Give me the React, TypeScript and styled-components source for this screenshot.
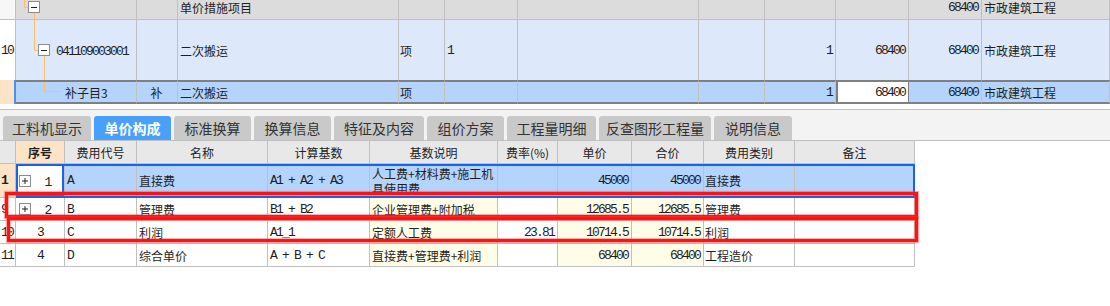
import React from 'react';
import styled, { createGlobalStyle, css } from 'styled-components';

const CJK = `'Noto Sans CJK SC', 'Noto Sans', sans-serif`;
const MONO = `'Liberation Mono', 'Noto Sans CJK SC', monospace`;

const TOP_COLS = '16px 121px 41px 221px 46px 73px 181px 66px 71px 73px 73px 1fr';
const BOTTOM_COLS = '16px 49px 72px 131px 102px 128px 60px 74px 72px 91px 120px';

const GRID = '#c0c0c0';
const TREE = '#f6c06a';
const SELECTED = '#b4d4fc';
const CREAM = '#fffde8';
const PEACH = '#fde4c6';
const FOCUS = '#1464f0';

type Align = 'left' | 'right' | 'center';
const justify = (a?: Align) => (a === 'right' ? 'flex-end' : a === 'center' ? 'center' : 'flex-start');

const GlobalStyle = createGlobalStyle`
  *, *::before, *::after { box-sizing: border-box; }
  html, body { margin: 0; padding: 0; background: #fff; }
  body { font-family: ${CJK}; font-size: 12px; color: #1e1e1e; }
`;

const Page = styled.div`
  position: relative;
  width: 1110px;
  height: 306px;
  overflow: hidden;
  background: #fff;
`;

/* ---------- upper grid (清单) ---------- */

const TopGrid = styled.div`
  height: 104px;
  overflow: hidden;
`;

const TopScroll = styled.div`
  margin-top: -5px;
`;

const TopRow = styled.div<{ $height: number }>`
  display: grid;
  grid-template-columns: ${TOP_COLS};
  height: ${p => p.$height}px;
`;

const TopCell = styled.div<{ $bg: string; $align?: Align; $bottom?: boolean; $thick?: boolean; $editing?: boolean }>`
  display: flex;
  align-items: center;
  justify-content: ${p => justify(p.$align)};
  min-width: 0;
  padding: 0 3px 0 2px;
  background: ${p => p.$bg};
  border-right: 1px solid ${GRID};
  border-bottom: ${p => (p.$bottom ? `1px solid ${GRID}` : 'none')};
  white-space: nowrap;
  overflow: hidden;
  ${p =>
    p.$thick &&
    css`
      border-top: 2px solid #7f7f7f;
      border-bottom: 2px solid #7f7f7f;
    `}
  ${p =>
    p.$editing &&
    css`
      background: #fff;
      border-right-color: #7f7f7f;
      box-shadow: inset 2px 0 0 #7f7f7f;
    `}
`;

const TreeCell = styled(TopCell)`
  padding: 0;
  align-items: stretch;
`;

const TreeLabel = styled.span`
  align-self: center;
`;

const RowMark = styled(TopCell)<{ $current?: boolean }>`
  padding: 0 0 0 1px;
  ${p =>
    p.$current &&
    css`
      background: ${PEACH};
      border-right: 2px solid #4a90f0;
    `}
`;

const Num = styled.span<{ $bold?: boolean }>`
  font-family: ${MONO};
  font-size: 13px;
  letter-spacing: -1.8px;
  font-weight: ${p => (p.$bold ? 700 : 400)};
`;

const Toggle = ({ x, y }: { x: number; y: number }) => (
  <g>
    <rect x={x + 0.5} y={y + 0.5} width={11} height={11} fill="#fff" stroke="#8c8c8c" />
    <path d={`M${x + 3} ${y + 6.5}H${x + 9}`} stroke="#222" />
  </g>
);

const TreeGroup = () => (
  <svg width={30} height={24} style={{ flex: 'none' }}>
    <path d="M8.5 0V12.5H12" stroke={TREE} fill="none" />
    <Toggle x={12} y={6} />
    <path d="M18.5 18V24" stroke={TREE} />
  </svg>
);

const TreeItem = () => (
  <svg width={40} height={60} style={{ flex: 'none' }}>
    <path d="M18.5 0V30.5H22" stroke={TREE} fill="none" />
    <Toggle x={22} y={24} />
    <path d="M28.5 36V60" stroke={TREE} />
  </svg>
);

const TreeLeaf = () => (
  <svg width={49} height={20} style={{ flex: 'none' }}>
    <path d="M28.5 0V9.5H44" stroke={TREE} fill="none" />
  </svg>
);

/* ---------- tabs ---------- */

const TabBar = styled.div`
  display: flex;
  align-items: flex-end;
  gap: 3px;
  height: 32px;
  margin-top: 5px;
  padding-left: 3px;
  background: #f3f3f3;
  border-top: 1px solid ${GRID};
  border-bottom: 1px solid ${GRID};
`;

const Tab = styled.div<{ $width: number; $active?: boolean }>`
  display: flex;
  align-items: center;
  justify-content: center;
  width: ${p => p.$width}px;
  height: 24px;
  border-radius: 3px 3px 0 0;
  font-size: 14px;
  color: ${p => (p.$active ? '#fff' : '#333')};
  font-weight: ${p => (p.$active ? 700 : 400)};
  background: ${p => (p.$active ? '#48a0f8' : '#c9c9c9')};
`;

/* ---------- lower grid (单价构成) ---------- */

const CostTable = styled.div`
  width: 915px;
`;

const CostRow = styled.div<{ $height: number }>`
  position: relative;
  display: grid;
  grid-template-columns: ${BOTTOM_COLS};
  height: ${p => p.$height}px;
`;

const HeadCell = styled.div<{ $current?: boolean }>`
  display: flex;
  align-items: center;
  justify-content: center;
  background: ${p => (p.$current ? PEACH : '#e8e8e8')};
  font-weight: ${p => (p.$current ? 700 : 400)};
  color: #222;
  border-right: 1px solid ${GRID};
  border-bottom: 1px solid ${GRID};
  white-space: nowrap;
`;

const CostCell = styled.div<{ $bg: string; $align?: Align; $focus?: boolean }>`
  display: flex;
  align-items: center;
  justify-content: ${p => justify(p.$align)};
  min-width: 0;
  padding: 0 3px 0 2px;
  background: ${p => p.$bg};
  border-right: 1px solid ${GRID};
  border-bottom: 1px solid ${GRID};
  white-space: nowrap;
  overflow: hidden;
  ${p => p.$focus && css`box-shadow: inset 0 0 0 2px ${FOCUS};`}
`;

const WrapText = styled.span`
  white-space: normal;
  line-height: 15px;
`;

const SeqCell = styled(CostCell)`
  padding: 0 0 0 3px;
`;

const SeqNum = styled.span`
  flex: 1;
  text-align: center;
`;

const SelectionFrame = styled.div`
  position: absolute;
  left: 16px;
  top: 0;
  width: 899px;
  height: 34px;
  border: 2px solid ${FOCUS};
  pointer-events: none;
`;

const Annotation = styled.div<{ $left: number; $top: number; $width: number; $height: number }>`
  position: absolute;
  left: ${p => p.$left}px;
  top: ${p => p.$top}px;
  width: ${p => p.$width}px;
  height: ${p => p.$height}px;
  border: 3px solid #ff1212;
  box-shadow: 0 0 1px 1px rgba(255, 60, 60, 0.45), inset 0 0 1px 1px rgba(255, 60, 60, 0.45);
  pointer-events: none;
`;

const ExpandBox = () => (
  <svg width={12} height={12} style={{ flex: 'none' }}>
    <rect x={0.5} y={0.5} width={11} height={11} fill="#fff" stroke="#8c8c8c" />
    <path d="M3 6H9M6 3V9" stroke="#222" />
  </svg>
);

const tabs = [
  { label: '工料机显示', width: 88 },
  { label: '单价构成', width: 77, active: true },
  { label: '标准换算', width: 77 },
  { label: '换算信息', width: 77 },
  { label: '特征及内容', width: 90 },
  { label: '组价方案', width: 77 },
  { label: '工程量明细', width: 89 },
  { label: '反查图形工程量', width: 112 },
  { label: '说明信息', width: 78 },
];

const headers = ['', '序号', '费用代号', '名称', '计算基数', '基数说明', '费率(%)', '单价', '合价', '费用类别', '备注'];

type CostItem = {
  mark: string;
  seq: string;
  expand?: boolean;
  code: string;
  name: string;
  base: string;
  desc: React.ReactNode;
  rate: string;
  price: string;
  total: string;
  kind: string;
};

const costItems: CostItem[] = [
  {
    mark: '1', seq: '1', expand: true, code: 'A', name: '直接费', base: 'A1 + A2 + A3',
    desc: <WrapText>人工费+材料费+施工机<br />具使用费</WrapText>, rate: '', price: '45000', total: '45000', kind: '直接费',
  },
  { mark: '9', seq: '2', expand: true, code: 'B', name: '管理费', base: 'B1 + B2', desc: '企业管理费+附加税', rate: '', price: '12685.5', total: '12685.5', kind: '管理费' },
  { mark: '10', seq: '3', code: 'C', name: '利润', base: 'A1_1', desc: '定额人工费', rate: '23.81', price: '10714.5', total: '10714.5', kind: '利润' },
  { mark: '11', seq: '4', code: 'D', name: '综合单价', base: 'A + B + C', desc: '直接费+管理费+利润', rate: '', price: '68400', total: '68400', kind: '工程造价' },
];

const CostLine = ({ item, selected }: { item: CostItem; selected: boolean }) => {
  const plain = selected ? SELECTED : '#fff';
  const calc = selected ? SELECTED : CREAM;
  return (
    <CostRow $height={selected ? 34 : 23}>
      <CostCell $bg={selected ? PEACH : '#fff'} style={{ padding: '0 0 0 1px' }}>
        <Num $bold={selected}>{item.mark}</Num>
      </CostCell>
      <SeqCell $bg="#fff" $focus={selected} style={item.expand ? undefined : { justifyContent: 'center', padding: 0 }}>
        {item.expand && <ExpandBox />}
        {item.expand ? <SeqNum><Num>{item.seq}</Num></SeqNum> : <Num>{item.seq}</Num>}
      </SeqCell>
      <CostCell $bg={plain}><Num>{item.code}</Num></CostCell>
      <CostCell $bg={plain}>{item.name}</CostCell>
      <CostCell $bg={plain}><Num>{item.base}</Num></CostCell>
      <CostCell $bg={calc}>{item.desc}</CostCell>
      <CostCell $bg={plain} $align="right"><Num>{item.rate}</Num></CostCell>
      <CostCell $bg={calc} $align="right"><Num>{item.price}</Num></CostCell>
      <CostCell $bg={calc} $align="right"><Num>{item.total}</Num></CostCell>
      <CostCell $bg={plain} style={{ paddingLeft: 1 }}>{item.kind}</CostCell>
      <CostCell $bg={plain} />
      {selected && <SelectionFrame />}
    </CostRow>
  );
};

const GROUP = '#dcdcdc';
const PARENT = '#dde9fb';

export default function App() {
  return (
    <Page>
      <GlobalStyle />
      <TopGrid>
        <TopScroll>
          <TopRow $height={25}>
            <RowMark $bg="#f7f7f7" $bottom />
            <TreeCell $bg={GROUP} $bottom><TreeGroup /></TreeCell>
            <TopCell $bg={GROUP} $bottom />
            <TopCell $bg={GROUP} $bottom>单价措施项目</TopCell>
            <TopCell $bg={GROUP} $bottom />
            <TopCell $bg={GROUP} $bottom />
            <TopCell $bg={GROUP} $bottom />
            <TopCell $bg={GROUP} $bottom />
            <TopCell $bg={GROUP} $bottom />
            <TopCell $bg={GROUP} $bottom />
            <TopCell $bg={GROUP} $bottom $align="right"><Num>68400</Num></TopCell>
            <TopCell $bg={GROUP} $bottom>市政建筑工程</TopCell>
          </TopRow>
          <TopRow $height={60}>
            <RowMark $bg="#fff"><Num>10</Num></RowMark>
            <TreeCell $bg={PARENT}><TreeItem /><TreeLabel><Num>041109003001</Num></TreeLabel></TreeCell>
            <TopCell $bg={PARENT} />
            <TopCell $bg={PARENT}>二次搬运</TopCell>
            <TopCell $bg={PARENT} style={{ paddingLeft: 1 }}>项</TopCell>
            <TopCell $bg={PARENT}><Num>1</Num></TopCell>
            <TopCell $bg={PARENT} />
            <TopCell $bg={PARENT} />
            <TopCell $bg={PARENT} $align="right"><Num>1</Num></TopCell>
            <TopCell $bg={PARENT} $align="right"><Num>68400</Num></TopCell>
            <TopCell $bg={PARENT} $align="right"><Num>68400</Num></TopCell>
            <TopCell $bg={PARENT}>市政建筑工程</TopCell>
          </TopRow>
          <TopRow $height={24}>
            <RowMark $bg={PEACH} $current />
            <TreeCell $bg={SELECTED} $thick><TreeLeaf /><TreeLabel>补子目3</TreeLabel></TreeCell>
            <TopCell $bg={SELECTED} $thick $align="center">补</TopCell>
            <TopCell $bg={SELECTED} $thick>二次搬运</TopCell>
            <TopCell $bg={SELECTED} $thick style={{ paddingLeft: 1 }}>项</TopCell>
            <TopCell $bg={SELECTED} $thick />
            <TopCell $bg={SELECTED} $thick />
            <TopCell $bg={SELECTED} $thick />
            <TopCell $bg={SELECTED} $thick $align="right"><Num>1</Num></TopCell>
            <TopCell $bg={SELECTED} $thick $editing $align="right"><Num>68400</Num></TopCell>
            <TopCell $bg={SELECTED} $thick $align="right"><Num>68400</Num></TopCell>
            <TopCell $bg={SELECTED} $thick>市政建筑工程</TopCell>
          </TopRow>
        </TopScroll>
      </TopGrid>

      <TabBar>
        {tabs.map(t => (
          <Tab key={t.label} $width={t.width} $active={t.active}>{t.label}</Tab>
        ))}
      </TabBar>

      <CostTable>
        <CostRow $height={23}>
          {headers.map((h, i) => (
            <HeadCell key={i} $current={i === 1}>{h}</HeadCell>
          ))}
        </CostRow>
        {costItems.map((item, i) => (
          <CostLine key={item.seq} item={item} selected={i === 0} />
        ))}
      </CostTable>

      <Annotation $left={5} $top={192} $width={913} $height={26} />
      <Annotation $left={7} $top={217} $width={911} $height={25} />
    </Page>
  );
}
